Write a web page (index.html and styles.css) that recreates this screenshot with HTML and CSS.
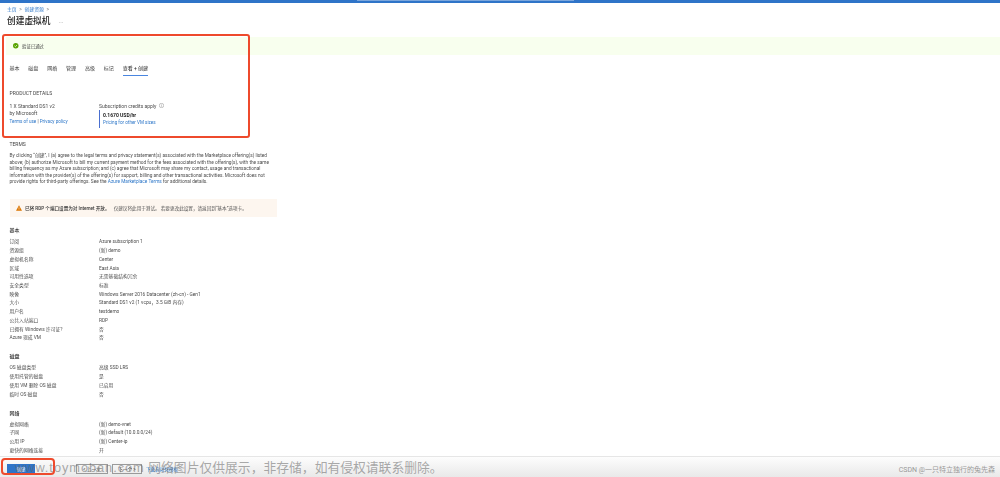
FILE: index.html
```html
<!DOCTYPE html>
<html lang="zh">
<head>
<meta charset="UTF-8">
<meta name="viewport" content="width=device-width, initial-scale=1.0">
<title>创建虚拟机</title>
<link rel="stylesheet" href="styles.css">
</head>
<body>

<div class="topbar"><div class="topbar-mid"></div></div>

<div class="head">
    <div class="crumbs"><a>主页</a> <span>&gt;</span> <a>创建资源</a> <span>&gt;</span></div>
    <h1>创建虚拟机 <span class="dots">···</span></h1>
</div>

<!-- VALIDATION -->
<div class="banner">
    <svg class="ok-icon" viewBox="0 0 12 12"><circle cx="6" cy="6" r="6" fill="#57a300"/><path d="M3.2 6.2 5.2 8.1 8.9 4.1" fill="none" stroke="#fff" stroke-width="1.5"/></svg>
    <span>验证已通过</span>
</div>

<div class="content">
    <!-- TABS -->
    <div class="tabs">
        <span>基本</span><span>磁盘</span><span>网络</span><span>管理</span><span>高级</span><span>标记</span><span class="active">查看 + 创建</span>
    </div>

    <!-- PRODUCT -->
    <div class="label product-title">PRODUCT DETAILS</div>
    <div class="product">
        <div class="product-left">
            <div>1 X Standard DS1 v2</div>
            <div>by Microsoft</div>
            <div class="product-links"><a>Terms of use</a> | <a>Privacy policy</a></div>
        </div>
        <div>
            <div class="credits">Subscription credits apply <svg class="info" viewBox="0 0 10 10"><circle cx="5" cy="5" r="4.4" fill="none" stroke="#555" stroke-width=".7"/><path d="M5 4.4v3M5 2.6v1" stroke="#555" stroke-width=".7"/></svg></div>
            <div class="price">
                <b>0.1670 USD/hr</b>
                <a>Pricing for other VM sizes</a>
            </div>
        </div>
    </div>

    <!-- TERMS -->
    <div class="label terms-title">TERMS</div>
    <p class="terms">By clicking “创建”, I (a) agree to the legal terms and privacy statement(s) associated with the Marketplace offering(s) listed above; (b) authorize Microsoft to bill my current payment method for the fees associated with the offering(s), with the same billing frequency as my Azure subscription; and (c) agree that Microsoft may share my contact, usage and transactional information with the provider(s) of the offering(s) for support, billing and other transactional activities. Microsoft does not provide rights for third-party offerings. See the <a>Azure Marketplace Terms</a> for additional details.</p>

    <div class="warning">
        <svg class="warn-icon" viewBox="0 0 12 11"><path d="M6 0 12 11H0Z" fill="#db7500"/><path d="M6 4v3.6M6 8.4v1.1" stroke="#fff" stroke-width="1"/></svg>
        <span><b>已将 RDP 个端口设置为对 Internet 开放。</b> 仅建议将此用于测试。 若要更改此设置，请返回到“基本”选项卡。</span>
    </div>

    <!-- SUMMARY -->
    <h2>基本</h2>
    <div class="rows">
        <div>订阅</div><div>Azure subscription 1</div>
        <div>资源组</div><div>(新) demo</div>
        <div>虚拟机名称</div><div>Center</div>
        <div>区域</div><div>East Asia</div>
        <div>可用性选项</div><div>无需基础结构冗余</div>
        <div>安全类型</div><div>标准</div>
        <div>映像</div><div>Windows Server 2016 Datacenter (zh-cn) - Gen1</div>
        <div>大小</div><div>Standard DS1 v2 (1 vcpu，3.5 GiB 内存)</div>
        <div>用户名</div><div>testdemo</div>
        <div>公共入站端口</div><div>RDP</div>
        <div>已拥有 Windows 许可证?</div><div>否</div>
        <div>Azure 现成 VM</div><div>否</div>
    </div>

    <h2>磁盘</h2>
    <div class="rows">
        <div>OS 磁盘类型</div><div>高级 SSD LRS</div>
        <div>使用托管的磁盘</div><div>是</div>
        <div>使用 VM 删除 OS 磁盘</div><div>已启用</div>
        <div>临时 OS 磁盘</div><div>否</div>
    </div>

    <h2>网络</h2>
    <div class="rows">
        <div>虚拟网络</div><div>(新) demo-vnet</div>
        <div>子网</div><div>(新) default (10.0.0.0/24)</div>
        <div>公用 IP</div><div>(新) Center-ip</div>
        <div>更快的网络连接</div><div>开</div>
    </div>
</div>

<!-- FOOTER -->
<div class="footer">
    <button class="primary">创建</button>
    <button class="ghost prev">&lt; 上一步</button>
    <button class="ghost next">下一个 &gt;</button>
    <a class="download">下载自动化模板</a>
</div>

<!-- overlays -->
<div class="mark mark-top"></div>
<div class="mark mark-btn"></div>
<div class="watermark"><span class="wm-url">www.toymoban.com</span> 网络图片仅供展示，非存储，如有侵权请联系删除。</div>
<div class="csdn">CSDN @一只特立独行的兔先森</div>

</body>
</html>
```

FILE: styles.css
```css
:root {
    --blue: #2f74c8;
    --link: #2f78c9;
    --text: #3c3c3c;
    --muted: #4c4c4c;
}
html, body {
    margin: 0;
    height: 477px;
    overflow: hidden;
}
body {
    position: relative;
    background: #fff;
    color: var(--text);
    font-family: Roboto, "Noto Sans CJK SC", sans-serif;
    font-size: 5px;
}
a { color: var(--link); }
.topbar {
    height: 3px;
    background: var(--blue);
}
.topbar-mid {
    width: 217px;
    height: 1px;
    margin-left: 357px;
    background: #7ba6dc;
}
.head, .banner, .content, .footer { filter: blur(0.3px); }
.head { padding: 3px 7px 0; height: 34px; box-sizing: border-box; }
.crumbs { font-size: 4.8px; line-height: 7px; color: #777; }
.crumbs span { margin: 0 1.5px; }
h1 {
    margin: 1.5px 0 0;
    font-size: 8.7px;
    line-height: 13px;
    font-weight: 500;
    color: #222;
}
.dots { margin-left: 6px; font-size: 6px; color: #888; font-weight: 400; }
.banner {
    display: flex;
    align-items: center;
    gap: 3.5px;
    height: 17.5px;
    margin-left: 6px;
    padding-left: 7px;
    background: #f8ffee;
    color: #444;
    font-size: 4.4px;
}
.ok-icon { width: 5.5px; height: 5.5px; }
.content { padding: 0 9.5px; }
.tabs {
    display: flex;
    gap: 8.85px;
    height: 21.5px;
    padding-top: 9.5px;
    box-sizing: border-box;
    line-height: 9px;
}
.tabs span { height: 11px; }
.tabs .active {
    border-bottom: 1px solid #4a86e0;
    color: #222;
}
.label { line-height: 7px; color: #444; }
.product-title { margin-top: 14px; }
.product {
    display: flex;
    margin-top: 5.5px;
    height: 37px;
    color: var(--muted);
    line-height: 7.6px;
}
.product-left { width: 89.5px; }
.product-links { font-size: 4.6px; }
.credits { display: flex; align-items: center; gap: 3px; line-height: 6px; }
.info { width: 5px; height: 5px; }
.price {
    display: flex;
    flex-direction: column;
    width: fit-content;
    margin-top: 1px;
    padding: 1px 0 1px 3px;
    border-left: 1px solid #4a6fd0;
    line-height: 8px;
}
.price b { color: #222; }
.price a { font-size: 4.6px; }
.terms-title { margin-top: 1.5px; }
.terms {
    width: 267px;
    margin: 5px 0 0;
    line-height: 6.6px;
    font-size: 4.75px;
    color: var(--muted);
}
.warning {
    display: flex;
    align-items: center;
    gap: 3px;
    width: 267px;
    height: 18px;
    margin-top: 13px;
    padding-left: 6.5px;
    background: #fdf6ef;
    box-sizing: border-box;
    font-size: 4.6px;
    color: #555;
}
.warning b { color: #333; font-weight: 500; margin-right: 3px; }
.warn-icon { width: 6px; height: 6px; flex-shrink: 0; }
h2 {
    margin: 10.5px 0 3.9px;
    font-size: 5px;
    line-height: 7px;
    font-weight: 500;
    color: #333;
}
.rows {
    display: grid;
    grid-template-columns: 89.5px 1fr;
    grid-auto-rows: 8.72px;
    line-height: 8.72px;
    font-size: 4.8px;
    color: var(--muted);
}
.footer {
    position: absolute;
    left: 0;
    right: 0;
    bottom: 0;
    display: flex;
    align-items: center;
    height: 21.5px;
    padding: 4px 0 0 7px;
    box-sizing: border-box;
    border-top: 1px solid #e6e6e6;
    background: linear-gradient(#fdfdfd, #e9e9e9);
    font-size: 4.6px;
}
button {
    height: 10px;
    padding: 0;
    border: none;
    font: inherit;
}
.primary {
    width: 28px;
    background: #2f74c8;
    color: #fff;
}
.ghost {
    background: transparent;
    border: 1px solid #9a9a9a;
    color: #444;
}
.prev { width: 32px; margin-left: 41px; }
.next { width: 30px; margin-left: 4px; }
.download { margin-left: 4px; color: #2f78c9; }
.mark {
    position: absolute;
    border: 2px solid #ee4a2c;
    border-radius: 3px;
    box-sizing: border-box;
}
.mark-top { left: 2px; top: 34px; width: 248px; height: 104px; }
.mark-btn { left: 1px; top: 458px; width: 54px; height: 17px; border-radius: 4px; }
.watermark {
    position: absolute;
    left: 15px;
    top: 458px;
    font-family: "Liberation Sans", "Noto Sans CJK SC", sans-serif;
    font-size: 12.8px;
    line-height: 20px;
    white-space: nowrap;
    color: rgba(100, 100, 100, 0.55);
}
.wm-url { letter-spacing: 0.95px; }
.csdn {
    position: absolute;
    right: 5px;
    top: 466px;
    font-size: 7px;
    line-height: 8px;
    color: #999;
}
```
